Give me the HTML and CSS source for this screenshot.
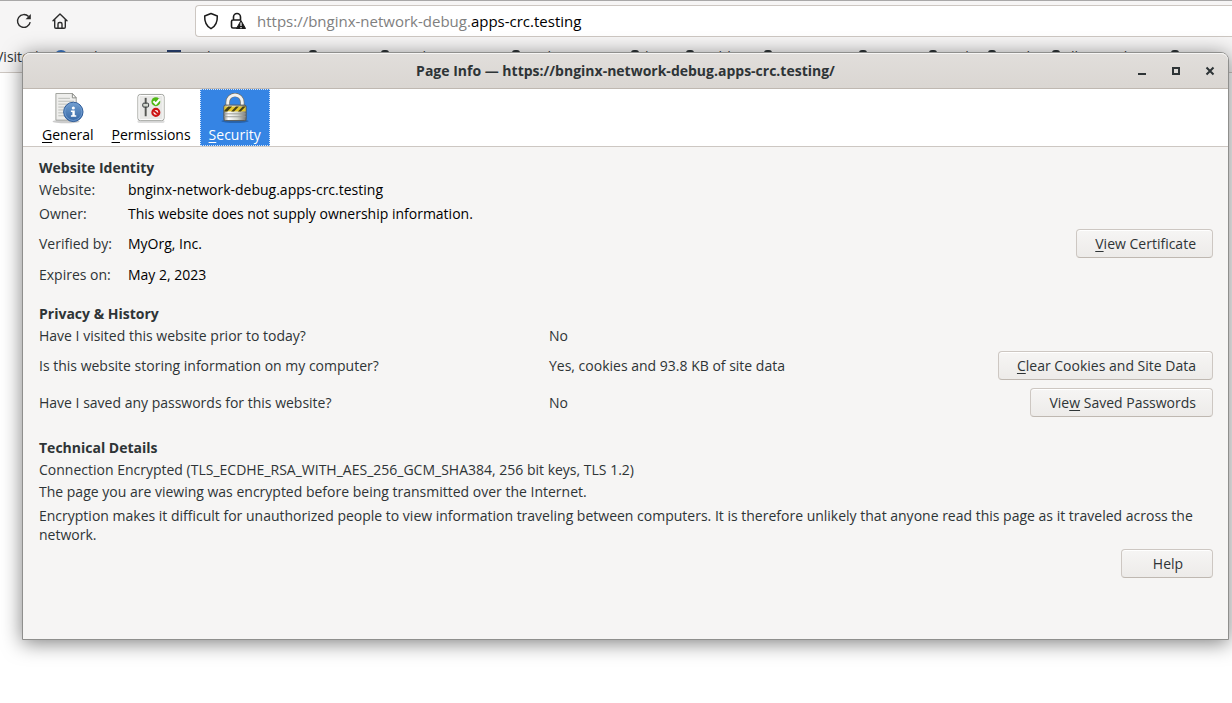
FILE: index.html
```html
<!DOCTYPE html>
<html lang="en">
<head>
<meta charset="utf-8">
<title>Page Info</title>
<link rel="stylesheet" href="styles.css">
</head>
<body>
<div class="browser">
  <header class="navbar">
    <div class="nav-buttons">
      <button class="nav-button" aria-label="Reload">
        <svg width="16" height="16" viewBox="0 0 16 16" fill="none" stroke="#2b2b2b" stroke-width="1.4"><path d="M14.2 9.2A6.4 6.4 0 1 1 12.6 3.6"/><path d="M14.8 1v5.2H9.6z" fill="#2b2b2b" stroke="none"/></svg>
      </button>
      <button class="nav-button" aria-label="Home">
        <svg width="16" height="16" viewBox="0 0 16 16" fill="none" stroke="#2b2b2b" stroke-width="1.4" stroke-linejoin="round" stroke-linecap="round"><path d="M1 7.8 8 1l7 6.8M2.7 6.5V14q0 1.2 1.2 1.200h8.200q1.200 0 1.200-1.200V6.500"/><path d="M6 15v-4q0-1.500 1.500-1.500h1q1.500 0 1.500 1.500v4"/></svg>
      </button>
    </div>
    <div class="urlbar">
      <svg width="16" height="18" viewBox="0 0 16 18" fill="none" stroke="#1b1b1b" stroke-width="1.5" stroke-linejoin="round"><path d="M8 1.500 14.300 4c.3 6-1.300 10-6.300 12.700C3 14 1.400 10 1.700 4z"/></svg>
      <svg width="16" height="18" viewBox="0 0 16 18"><path d="M3.500 8V5a3.500 3.500 0 0 1 7 0v3M7 16H3q-1.500 0-1.500-1.500v-5Q1.500 8 3 8h8" fill="none" stroke="#1b1b1b" stroke-width="1.6"/><path d="M11 8.500 15.500 16.500H6.500z" fill="#1b1b1b" stroke="#1b1b1b" stroke-linejoin="round"/><path d="M11 10.500v3.500M11 15v1.200" stroke="#fff" stroke-width="1.2"/></svg>
      <span class="url">https://bnginx-network-debug.<span class="url-host">apps-crc.testing</span></span>
    </div>
  </header>
  <nav class="bookmarks">
    <span>Visited</span>
    <span><i class="globe"></i>Fedora Docs</span>
    <span><i class="square"></i>Fedora Magazine</span>
    <span><i class="folder"></i>Projects</span>
    <span><i class="folder"></i>Product Docs</span>
    <span><i class="folder"></i>Red Hat Linux</span>
    <span><i class="folder"></i>k8s</span>
    <span><i class="folder"></i>reddit</span>
    <span><i class="folder"></i>Content</span>
    <span><i class="folder"></i>Events</span>
    <span><i class="folder"></i>Tech</span>
    <span><i class="folder"></i>Tools</span>
    <span><i class="folder"></i>dla-travel</span>
    <span><i class="folder"></i>Free</span>
  </nav>
</div>

<section class="dialog" role="dialog" aria-labelledby="dialog-title">
  <div class="titlebar">
    <h1 id="dialog-title">Page Info — https://bnginx-network-debug.apps-crc.testing/</h1>
    <div class="window-controls">
      <button aria-label="Minimize"><svg width="10" height="10"><path d="M1 8h8" stroke="#2e3436" stroke-width="2"/></svg></button>
      <button aria-label="Maximize"><svg width="10" height="10"><path d="M2 2h6v6H2z" fill="none" stroke="#2e3436" stroke-width="2"/></svg></button>
      <button aria-label="Close"><svg width="10" height="10"><path d="m1.500 1.500 7 7m0-7-7 7" stroke="#2e3436" stroke-width="2"/></svg></button>
    </div>
  </div>
  <div class="tabs" role="tablist">
    <button class="tab" role="tab">
      <svg width="32" height="32" viewBox="0 0 32 32"><defs><linearGradient id="info" x2="0" y2="1"><stop stop-color="#719fd0"/><stop offset="1" stop-color="#3465a4"/></linearGradient></defs><ellipse cx="14" cy="29.500" rx="14" ry="1.800" fill="#ccc"/><path d="M3.500 .5h17l4 4.500v23h-21z" fill="#eeeeec" stroke="#a0a29d"/><path d="m20.500 .5 4 4.500h-4z" fill="#fff" stroke="#888a85"/><path d="M6 5.500h12M6 8.500h16M6 11.500h16M6 14.500h16M6 17.500h16M6 20.500h16M6 23.500h12" stroke="#bbbdb8"/><circle cx="21.500" cy="19.500" r="10" fill="url(#info)" stroke="#2b5a98"/><circle cx="21.500" cy="19.500" r="8.800" fill="none" stroke="#6f9bd0"/><circle cx="21.500" cy="15.500" r="1.600" fill="#fff"/><path d="M19 18h4v5h1.500v1.500H19V23h1.500v-3.500H19z" fill="#fff"/></svg>
      <span><u>G</u>eneral</span>
    </button>
    <button class="tab" role="tab">
      <svg width="32" height="32" viewBox="0 0 32 32"><rect x="2" y="28" width="28" height="3" rx="1.500" fill="#ddd"/><rect x="2.500" y="1.500" width="27" height="27" rx="2.500" fill="#e8e8e6" stroke="#999b96"/><rect x="3.500" y="2.500" width="25" height="25" rx="1.500" fill="none" stroke="#fff"/><path d="M10.500 5v19" stroke="#555753" stroke-width="2"/><rect x="7.500" y="10.500" width="6" height="4" rx="1" fill="#d3d7cf" stroke="#2e3436"/><circle cx="21" cy="9" r="4.600" fill="#4fb814"/><path d="m18.500 8.500 2.500 2.500 4-4.500" fill="none" stroke="#fff" stroke-width="2.200"/><circle cx="21" cy="20" r="3.600" fill="#fff" stroke="#cc1515" stroke-width="2.200"/><path d="m18 17.500 6 5" stroke="#cc1515" stroke-width="2"/></svg>
      <span><u>P</u>ermissions</span>
    </button>
    <button class="tab selected" role="tab" aria-selected="true">
      <svg width="32" height="32" viewBox="0 0 32 32"><defs><linearGradient id="lock"><stop stop-color="#888a85"/><stop offset=".2" stop-color="#fff"/><stop offset=".6" stop-color="#d3d7cf"/><stop offset="1" stop-color="#777"/></linearGradient></defs><ellipse cx="16" cy="29" rx="14" ry="2" fill="#1e4e8c" opacity=".6"/><path d="M8.500 15V9.500a7.500 7.500 0 0 1 15 0V15" fill="none" stroke="#70726e" stroke-width="4.500"/><path d="M8.500 15V9.500a7.500 7.500 0 0 1 15 0V15" fill="none" stroke="#f2f2f0" stroke-width="3"/><rect x="4.500" y="12.500" width="23" height="16" rx="1.500" fill="url(#lock)" stroke="#555753"/><path d="M5 14h22v5H5z" fill="#e3c52b"/><path d="m9 14-4 4v1h3l5-5zm8 0-5 5h3l5-5zm7 0-5 5h3l5-5z" fill="#454018"/><path d="M5 21.500h22M5 24.500h22" stroke="#999b96"/></svg>
      <span><u>S</u>ecurity</span>
    </button>
  </div>
  <main class="panel">
    <section class="identity">
      <h2>Website Identity</h2>
      <dl>
        <div class="row"><dt>Website:</dt><dd>bnginx-network-debug.apps-crc.testing</dd></div>
        <div class="row"><dt>Owner:</dt><dd>This website does not supply ownership information.</dd></div>
        <div class="row tall"><dt>Verified by:</dt><dd>MyOrg, Inc.</dd><dd class="action"><button class="button"><u>V</u>iew Certificate</button></dd></div>
        <div class="row"><dt>Expires on:</dt><dd>May 2, 2023</dd></div>
      </dl>
    </section>
    <section class="privacy">
      <h2>Privacy &amp; History</h2>
      <dl>
        <div class="row"><dt>Have I visited this website prior to today?</dt><dd>No</dd></div>
        <div class="row tall"><dt>Is this website storing information on my computer?</dt><dd>Yes, cookies and 93.8 KB of site data</dd><dd class="action"><button class="button"><u>C</u>lear Cookies and Site Data</button></dd></div>
        <div class="row tall"><dt>Have I saved any passwords for this website?</dt><dd>No</dd><dd class="action"><button class="button">Vie<u>w</u> Saved Passwords</button></dd></div>
      </dl>
    </section>
    <section class="technical">
      <h2>Technical Details</h2>
      <p>Connection Encrypted (TLS_ECDHE_RSA_WITH_AES_256_GCM_SHA384, 256 bit keys, TLS 1.2)</p>
      <p>The page you are viewing was encrypted before being transmitted over the Internet.</p>
      <p class="last">Encryption makes it difficult for unauthorized people to view information traveling between computers. It is therefore unlikely that anyone read this page as it traveled across the network.</p>
    </section>
    <footer class="footer"><button class="button help">Help</button></footer>
  </main>
</section>
</body>
</html>
```
FILE: styles.css
```css
* { box-sizing: border-box; }
body {
  margin: 0;
  min-height: 100vh;
  overflow: hidden;
  background: #fff;
  color: #2e3436;
  font: 14px/19px "Open Sans", "Noto Sans", sans-serif;
}
h1, h2, p, dl, dd { margin: 0; font-size: inherit; }
button { font: inherit; color: inherit; }
u { text-underline-offset: 2px; }

.browser {
  height: 73px;
  overflow: hidden;
  background: #f6f5f5;
  border-top: 1px solid #a9a8a8;
  border-bottom: 1px solid #cdc7c2;
}
.navbar { display: flex; align-items: center; height: 40px; }
.nav-buttons { display: flex; gap: 20px; width: 195px; padding-left: 16px; }
.nav-button { display: flex; padding: 0; border: 0; background: none; }
.urlbar {
  display: flex;
  flex: 1;
  align-items: center;
  gap: 11px;
  height: 32px;
  padding-left: 7px;
  background: #fff;
  border: 1px solid #cdc7c2;
  border-right: 0;
  border-radius: 4px 0 0 4px;
}
.url { color: #808080; font-size: 15px; }
.url-host { color: #000; }
.bookmarks {
  display: grid;
  grid-template-columns: 59px 113px 142px 72px 131px 119px 55px 78px 95px 70px 59px 64px 119px 60px;
  align-items: center;
  height: 31px;
  margin-left: -5px;
  white-space: nowrap;
}
.bookmarks span { display: flex; align-items: center; gap: 6px; }
.globe { width: 14px; height: 14px; border-radius: 50%; background: #3a76c4; }
.square { width: 14px; height: 14px; background: #294172; }
.folder { width: 8px; height: 13px; border: 2px solid #2e3436; border-radius: 3px; }

.dialog {
  position: absolute;
  inset: 52px 3px 63px 22px;
  display: flex;
  flex-direction: column;
  background: #f6f5f4;
  border: 1px solid #8f8f8d;
  border-radius: 8px 8px 0 0;
  box-shadow: 0 3px 20px rgba(0, 0, 0, .5);
}
.titlebar {
  position: relative;
  display: flex;
  align-items: center;
  justify-content: center;
  height: 36px;
  background: linear-gradient(#e1dedb, #dad6d2);
  border-bottom: 1px solid #bfb8b1;
  border-radius: 7px 7px 0 0;
  box-shadow: inset 0 1px #f6f5f4;
}
.window-controls { position: absolute; right: 13px; display: flex; gap: 24px; }
.window-controls button { display: flex; padding: 0; border: 0; background: none; }
.tabs {
  display: flex;
  height: 58px;
  padding-left: 10px;
  background: #fff;
  border-bottom: 1px solid #cdc7c2;
}
.tab {
  display: flex;
  flex-direction: column;
  align-items: center;
  padding: 3px 8px 1px;
  color: #000;
  background: none;
  border: 1px solid transparent;
}
.tab span { margin-top: 1px; }
.selected { color: #fff; background: #3584e4; border: 1px dotted #d5e5fa; }
.panel { padding: 11px 15px 11px 16px; }
.row { display: grid; grid-template-columns: 89px 1fr auto; align-items: center; min-height: 24px; }
.tall { min-height: 37px; }
.identity dd { color: #000; }
.privacy .row { grid-template-columns: 510px 1fr auto; }
.privacy { margin-top: 18px; }
.technical { margin-top: 17px; }
.technical p { margin-top: 3px; }
.technical .last { margin-top: 5px; }
.button {
  height: 29px;
  padding: 0 16px 0 18px;
  color: #2e3436;
  background: linear-gradient(#f6f5f4, #edebe9);
  border: 1px solid #cdc7c2;
  border-bottom-color: #bfb8b1;
  border-radius: 4px;
  box-shadow: inset 0 1px #fff;
}
.action { display: flex; }
.footer { display: flex; justify-content: flex-end; margin-top: 5px; }
.help { width: 92px; }
```
